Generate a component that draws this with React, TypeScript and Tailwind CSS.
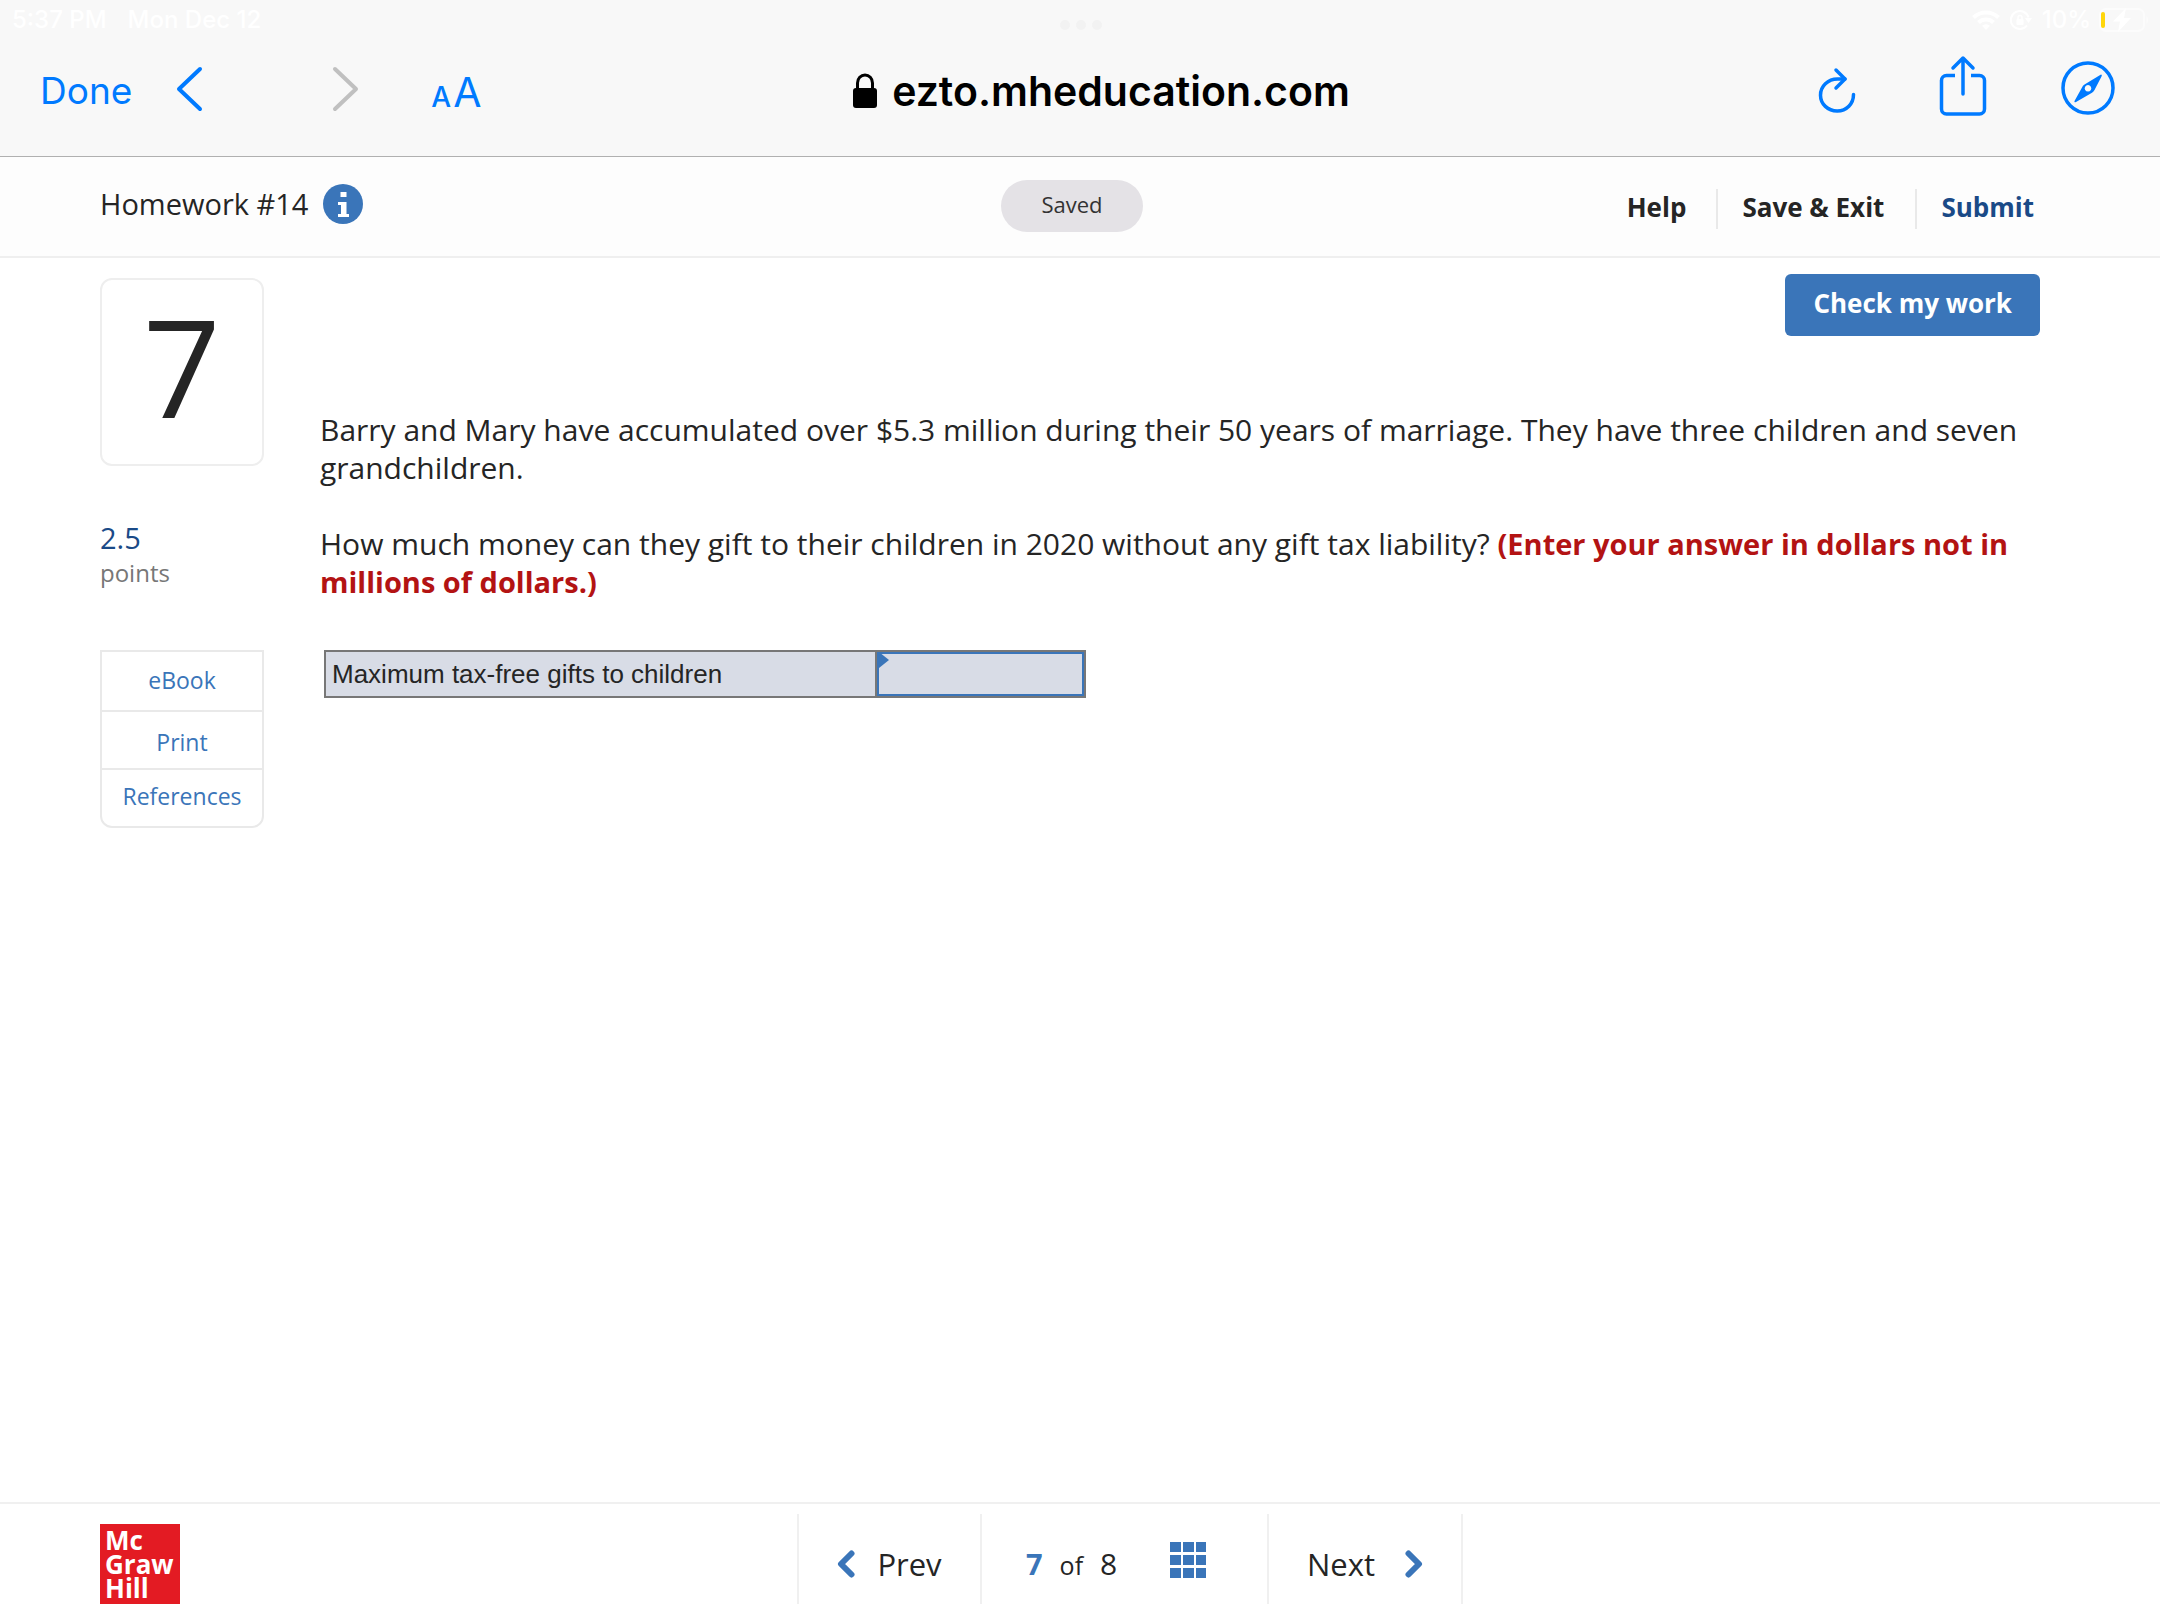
import React, { useState } from 'react';

const StatusBar: React.FC = () => (
  <div className="grid h-10 grid-cols-[1fr_auto_1fr] items-center pl-3 pr-[11px] text-[24px] leading-10 font-medium text-white">
    <div className="flex gap-[21px]">
      <span>5:37 PM</span>
      <span>Mon Dec 12</span>
    </div>
    <div className="mt-[10px] flex gap-[6px]">
      <span className="size-[10px] rounded-full bg-[#f2f2f2]" />
      <span className="size-[10px] rounded-full bg-[#f2f2f2]" />
      <span className="size-[10px] rounded-full bg-[#f2f2f2]" />
    </div>
    <div className="flex items-center justify-end">
      <svg className="mr-[10px] h-5 w-7" viewBox="0 0 28 20" fill="none" stroke="currentColor" strokeWidth="4">
        <path d="M1.5 7.5a18 18 0 0 1 25 0" />
        <path d="M6.5 12.5a11 11 0 0 1 15 0" />
        <path d="M14 20l-4-4.2a6 6 0 0 1 8 0z" fill="currentColor" stroke="none" />
      </svg>
      <svg className="mr-[10px] h-5 w-[22px]" viewBox="0 0 22 20" fill="none" stroke="currentColor" strokeWidth="2">
        <path d="M17 15.5a9 9 0 1 1 1.5-8" />
        <path d="M15 8h7l-3.5 5z" fill="currentColor" stroke="none" />
        <rect x="6.5" y="9" width="7" height="6" rx="1" fill="currentColor" stroke="none" />
        <path d="M8 9.5V7.5a2 2 0 0 1 4 0v2" strokeWidth="1.5" />
      </svg>
      <span className="mr-2">10%</span>
      <svg className="h-6 w-[50px]" viewBox="0 0 50 24" fill="none">
        <rect x="1" y="1" width="44" height="22" rx="6" stroke="#fcfcfc" strokeWidth="2" />
        <path d="M47.5 8.5c2 1 2 6 0 7z" fill="#fcfcfc" />
        <rect x="2" y="4" width="4" height="16" rx="2" fill="#ffd60a" />
        <path d="M27 0L14 13.5h7L19 24l13-14h-7z" fill="#fff" />
      </svg>
    </div>
  </div>
);

const BrowserBar: React.FC = () => (
  <div className="border-b border-[#b0b0b0] bg-[#f8f8f8] pb-4 font-[Inter,sans-serif]">
    <StatusBar />
    <div className="grid h-[100px] grid-cols-[1fr_auto_1fr] items-center pl-10 pr-[45px] text-[#007aff]">
      <div className="flex items-center">
        <button type="button" className="pt-[2px] text-[37px] leading-[48px]">Done</button>
        <button type="button" aria-label="Back" className="ml-11">
          <svg className="h-12 w-7" viewBox="0 0 28 48" fill="none" stroke="currentColor" strokeWidth="4" strokeLinecap="round" strokeLinejoin="round">
            <path d="M24 3L3 23l21 20" />
          </svg>
        </button>
        <button type="button" aria-label="Forward" className="ml-[127px] text-[#c0c0c0]">
          <svg className="h-12 w-7" viewBox="0 0 28 48" fill="none" stroke="currentColor" strokeWidth="4" strokeLinecap="round" strokeLinejoin="round">
            <path d="M4 3l21 20L4 43" />
          </svg>
        </button>
        <button type="button" aria-label="Text size" className="ml-[72px] flex items-baseline gap-[2px] pt-2 leading-[48px]">
          <span className="text-[28px] font-medium">A</span>
          <span className="text-[41px]">A</span>
        </button>
      </div>
      <div className="flex items-center gap-[15px] pt-[2px] pl-12 text-black">
        <svg className="h-9 w-6" viewBox="0 0 24 36" fill="none">
          <rect x="0" y="15" width="24" height="20" rx="3" fill="currentColor" />
          <path d="M4.5 17V10a7.5 8 0 0 1 15 0v7" stroke="currentColor" strokeWidth="3" />
        </svg>
        <span className="text-[41px] leading-[52px] font-semibold">ezto.mheducation.com</span>
      </div>
      <div className="flex items-center justify-end">
        <button type="button" aria-label="Reload" className="mr-[83px]">
          <svg className="h-[60px] w-[38px]" viewBox="0 0 38 60" fill="none" stroke="currentColor" strokeWidth="3.5" strokeLinecap="round" strokeLinejoin="round">
            <path d="M27 19H19.5C9.8 19 2.500 26.500 2.500 35.200S9.800 51 19.200 51 35.500 43.800 35.500 34.500" />
            <path d="M18 10l9 9-9 9" />
          </svg>
        </button>
        <button type="button" aria-label="Share" className="mr-[74px]">
          <svg className="h-[60px] w-12 overflow-visible" viewBox="0 0 48 60" fill="none" stroke="currentColor" strokeWidth="3.5" strokeLinejoin="round">
            <path d="M16 15.5H7.500a5 5 0 0 0-5 5V49a5 5 0 0 0 5 5h33a5 5 0 0 0 5-5V20.500a5 5 0 0 0-5-5H32" />
            <path d="M24 34V-1M14 8l10-10 10 10" strokeLinecap="round" />
          </svg>
        </button>
        <button type="button" aria-label="Open in Safari">
          <svg className="h-[60px] w-[54px]" viewBox="0 0 54 60" fill="none">
            <circle cx="27" cy="28" r="25" stroke="currentColor" strokeWidth="3.5" />
            <path fillRule="evenodd" fill="currentColor" d="M40 14.500q1.500 0 .500 2L33.500 30a6 6 0 0 1-2.500 2.800L15 42q-2 1-1.500-1L21 27.500a6 6 0 0 1 2.500-3zM27 25a3.300 3.300 0 1 0 .01 0z" />
          </svg>
        </button>
      </div>
    </div>
  </div>
);

const AssignmentHeader: React.FC = () => (
  <header className="grid h-[101px] grid-cols-[1fr_auto_1fr] items-center border-b-2 border-[#efefef] bg-[#fdfdfd] pb-[2px] pl-[100px] pr-[116px]">
    <div className="flex items-center gap-[15px] pb-1">
      <h1 className="text-[29px] leading-[38px]">Homework #14</h1>
      <button type="button" aria-label="Assignment information">
        <svg className="size-10" viewBox="0 0 40 40">
          <circle cx="20" cy="20" r="20" fill="#3a75b9" />
          <path d="M17.5 8h6v5h-6zM15 18h8.5v12H26v3H15v-3h3v-9h-3z" fill="#fff" />
        </svg>
      </button>
    </div>
    <div className="rounded-full bg-[#e4e2e6] px-10 pb-1 text-[22px] leading-[48px] text-[#333]">Saved</div>
    <nav className="flex items-center justify-end pt-[6px] pr-[10px] text-[26px] leading-9 font-bold">
      <a href="#help" className="pr-[30px] pb-1">Help</a>
      <a href="#exit" className="border-l-2 border-[#e9e9e9] pr-[31px] pb-1 pl-6">Save &amp; Exit</a>
      <a href="#submit" className="border-l-2 border-[#e9e9e9] pb-1 pl-6 text-[#1a4a87]">Submit</a>
    </nav>
  </header>
);

const Sidebar: React.FC = () => (
  <aside className="w-[164px] shrink-0 pt-5">
    <div className="flex h-[188px] items-center justify-center rounded-xl border-2 border-[#eee] pb-3 text-[136px] leading-none">7</div>
    <div className="mt-[53px] text-[29px] leading-[38px] text-[#1a4a87]">2.5</div>
    <div className="text-[24px] leading-8 text-[#777]">points</div>
    <ul className="mt-[61px] divide-y-2 divide-[#e9e9e9] rounded-b-xl border-2 border-[#e9e9e9] text-center text-[23px] leading-[52px] text-[#3a75b9]">
      <li className="pt-[2px] pb-1"><a href="#ebook">eBook</a></li>
      <li className="pt-1"><a href="#print">Print</a></li>
      <li className="pb-1"><a href="#references">References</a></li>
    </ul>
  </aside>
);

const Question: React.FC = () => {
  const [answer, setAnswer] = useState('');

  return (
    <section className="flex min-w-0 flex-1 flex-col pt-4">
      <button type="button" className="h-[62px] self-end rounded-md bg-[#3a75b9] px-7 pb-1 text-[26px] font-bold text-white">
        Check my work
      </button>
      <div className="mt-[75px] space-y-[38px] text-[30px] leading-[38px]">
        <p>
          Barry and Mary have accumulated over $5.3 million during their 50 years of marriage. They have three children and seven grandchildren.
        </p>
        <p>
          How much money can they gift to their children in 2020 without any gift tax liability?{' '}
          <b className="text-[29px] font-bold text-[#b31313]">(Enter your answer in dollars not in millions of dollars.)</b>
        </p>
      </div>
      <table className="mt-[49px] ml-1 w-[762px] table-fixed border-collapse bg-[#d8dce6] font-['Liberation_Sans',sans-serif] text-[26px]">
        <tbody>
          <tr>
            <th scope="row" className="w-[551px] border-2 border-[#777] px-[6px] text-left font-normal">
              <label htmlFor="gifts">Maximum tax-free gifts to children</label>
            </th>
            <td className="relative border-2 border-[#777] p-0">
              <input
                id="gifts"
                type="text"
                value={answer}
                onChange={(e) => setAnswer(e.target.value)}
                className="block h-11 w-full border-2 border-[#3a75b9] bg-transparent px-2 text-right outline-none"
              />
              <svg className="absolute top-0 left-0 h-4 w-3" viewBox="0 0 12 16">
                <path d="M0 0h2l10 8-10 8H0z" fill="#3a75b9" />
              </svg>
            </td>
          </tr>
        </tbody>
      </table>
    </section>
  );
};

const Footer: React.FC = () => (
  <footer className="grid h-[118px] grid-cols-[1fr_auto_1fr] items-start border-t-2 border-[#f0f0f0] pl-[100px]">
    <div className="mt-5 size-20 bg-[#e31b23] pt-1 pl-[5px] text-[26px] leading-6 font-bold text-white">
      Mc<br />Graw<br />Hill
    </div>
    <nav className="mt-[10px] flex h-[90px] items-stretch divide-x-2 divide-[#f0f0f0] border-x-2 border-[#f0f0f0]">
      <button type="button" className="flex w-[183px] items-center justify-center gap-[22px] pt-[10px] text-[31px]">
        <svg className="h-7 w-[18px]" viewBox="0 0 18 28" fill="none" stroke="#3a75b9" strokeWidth="6" strokeLinecap="round" strokeLinejoin="round">
          <path d="M14.5 3.5L4 14l10.5 10.5" />
        </svg>
        Prev
      </button>
      <div className="flex w-[287px] items-center pt-[2px] pl-11">
        <div className="flex items-baseline gap-[17px] pt-[6px] text-[30px]">
          <b className="text-[29px] text-[#3a75b9]">7</b>
          <span className="text-[25px]">of</span>
          <span>8</span>
        </div>
        <button type="button" aria-label="Question list" className="ml-[53px]">
          <svg className="size-9" viewBox="0 0 36 36" fill="#3a75b9">
            {[0, 13, 26].map((y) =>
              [0, 13, 26].map((x) => <rect key={`${x}-${y}`} x={x} y={y} width="11" height="10" />)
            )}
          </svg>
        </button>
      </div>
      <button type="button" className="flex w-48 items-center justify-center gap-[30px] pt-[10px] text-[31px]">
        Next
        <svg className="h-7 w-[18px]" viewBox="0 0 18 28" fill="none" stroke="#3a75b9" strokeWidth="6" strokeLinecap="round" strokeLinejoin="round">
          <path d="M3.5 3.5L14 14 3.5 24.5" />
        </svg>
      </button>
    </nav>
  </footer>
);

const App: React.FC = () => (
  <div className="flex min-h-screen flex-col bg-white font-['Open_Sans',sans-serif] text-[#252525]">
    <BrowserBar />
    <AssignmentHeader />
    <main className="flex flex-1 gap-14 pl-[100px] pr-[120px]">
      <Sidebar />
      <Question />
    </main>
    <Footer />
  </div>
);

export default App;
